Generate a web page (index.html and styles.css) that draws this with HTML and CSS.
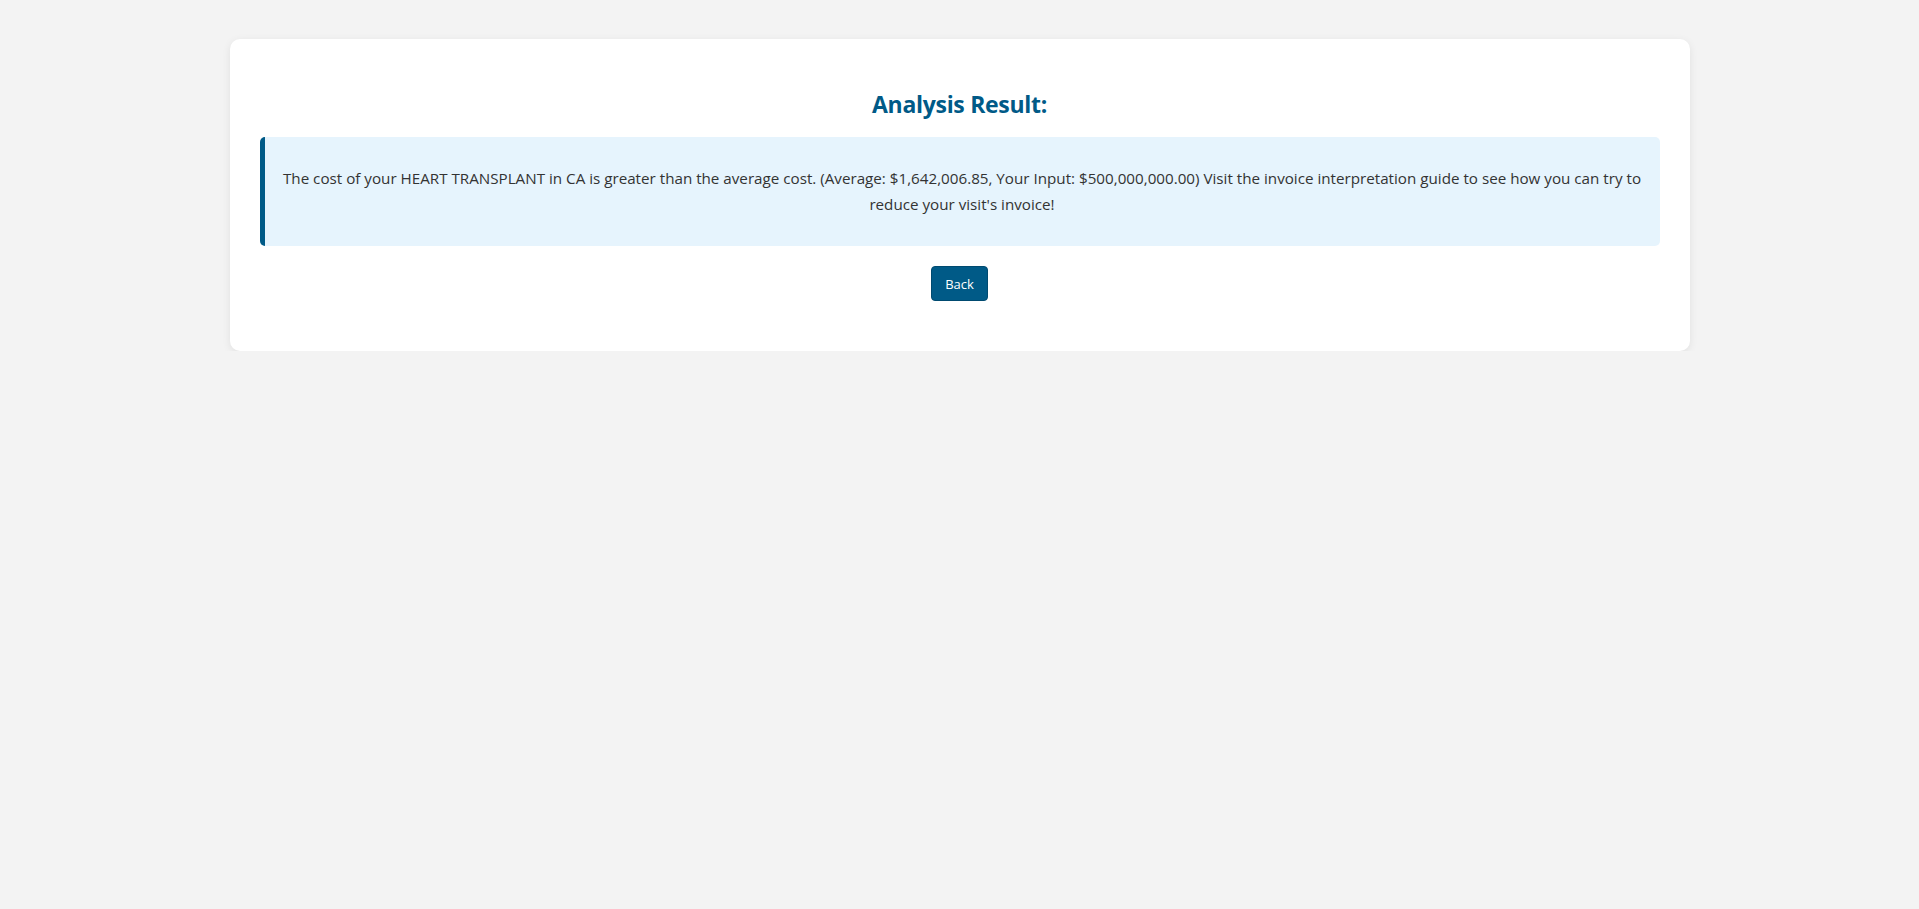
FILE: index.html
```html
<!DOCTYPE html>
<html lang="en">
<head>
<meta charset="utf-8">
<title>Analysis Result</title>
<link rel="stylesheet" href="styles.css">
</head>
<body>
<main class="page">
  <section class="card">
    <h2 class="title">Analysis Result:</h2>
    <div class="alert">
      <p class="alert-text">The cost of your HEART TRANSPLANT in CA is greater than the average cost. (Average: $1,642,006.85, Your Input: $500,000,000.00) Visit the invoice interpretation guide to see how you can try to reduce your visit's invoice!</p>
    </div>
    <div class="actions">
      <button class="btn" type="button">Back</button>
    </div>
  </section>
</main>
</body>
</html>
```

FILE: styles.css
```css
html, body {
  margin: 0;
  padding: 0;
}
body {
  background: #f3f3f3;
  font-family: "Open Sans", "Noto Sans", "Liberation Sans", sans-serif;
  color: #333333;
}
.page {
  padding-top: 39px;
  display: flex;
  justify-content: center;
}
.card {
  width: 1460px;
  box-sizing: border-box;
  background: #ffffff;
  border-radius: 10px;
  box-shadow: 0 2px 8px rgba(0, 0, 0, 0.08);
  padding: 49px 30px 50px;
}
.title {
  margin: 0 0 17px;
  text-align: center;
  font-size: 23px;
  letter-spacing: -0.3px;
  line-height: 32px;
  font-weight: 700;
  color: #005a87;
}
.alert {
  background: #e6f4fd;
  border-left: 5px solid #005a87;
  border-radius: 5px;
  padding: 29px 15px;
}
.alert-text {
  margin: 0;
  text-align: center;
  font-size: 15.2px;
  line-height: 25.6px;
  color: #333333;
}
.actions {
  display: flex;
  justify-content: center;
  margin-top: 20px;
}
.btn {
  width: 57px;
  height: 35px;
  background: #005a87;
  color: #ffffff;
  border: 1px solid #004a70;
  border-radius: 4px;
  font-family: inherit;
  font-size: 13px;
  padding: 0;
  cursor: pointer;
}
```
